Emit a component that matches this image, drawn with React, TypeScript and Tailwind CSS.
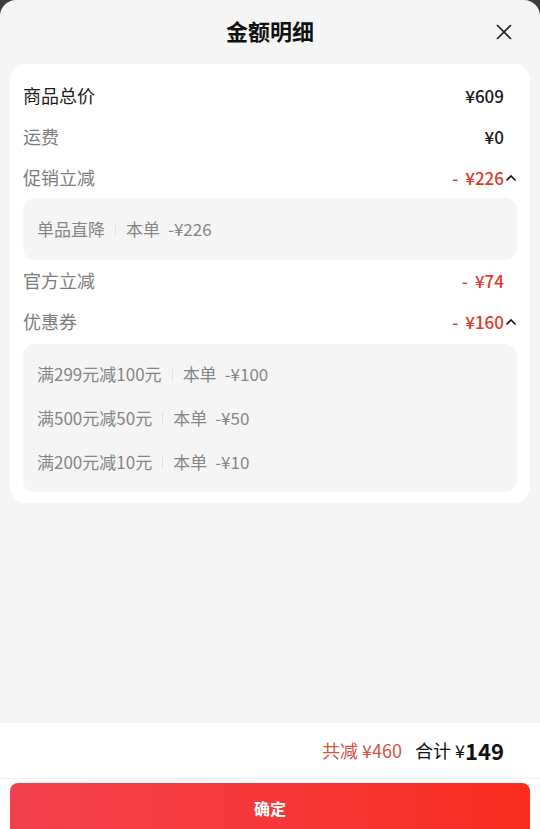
const ChevronUp = () => (
	<svg width="12" height="8" viewBox="0 0 12 8" className="ml-[1px]">
		<polyline points="1.5,6.5 6,2 10.5,6.5" fill="none" stroke="#111" strokeWidth="1.6" />
	</svg>
);

const Row = ({
	label,
	value,
	dark,
	red,
	arrow,
}: {
	label: string;
	value: string;
	dark?: boolean;
	red?: boolean;
	arrow?: boolean;
}) => (
	<div className="flex h-[41px] items-center justify-between">
		<span className={dark ? "text-[18px] text-[#1a1a1a]" : "text-[18px] text-[#7c7c7c]"}>{label}</span>
		<div className="flex items-center">
			{red ? (
				<span className="text-[17px] font-medium text-[#e0392a]">
					-<span className="ml-[7px]">{value}</span>
				</span>
			) : (
				<span className="text-[17px] font-medium text-[#1a1a1a]">{value}</span>
			)}
			<span className="flex w-[13px] justify-center">{arrow && <ChevronUp />}</span>
		</div>
	</div>
);

const SubItem = ({ name, amount }: { name: string; amount: string }) => (
	<div className="flex h-[44px] items-center text-[17px] text-[#858585]">
		<span>{name}</span>
		<span className="mx-[10px] h-[13px] w-px bg-[#e2e2e2]" />
		<span>本单</span>
		<span className="ml-[8px]">{amount}</span>
	</div>
);

export default function App() {
	return (
		<div
			className="h-[829px] overflow-hidden bg-[#3d3d3d]"
			style={{ fontFamily: '"Noto Sans CJK SC", "Noto Sans", sans-serif' }}
		>
			<div className="flex h-full flex-col rounded-t-[16px] bg-[#f5f5f5]">
				<div className="relative flex h-[64px] items-center justify-center pb-[4px]">
					<h1 className="text-[22px] font-bold text-[#111]">金额明细</h1>
					<button className="absolute right-[28px] top-[24px]">
						<svg width="16" height="16" viewBox="0 0 16 16">
							<path d="M1 1L15 15M15 1L1 15" stroke="#222" strokeWidth="1.7" fill="none" />
						</svg>
					</button>
				</div>

				<div className="mx-[10px] rounded-[16px] bg-white px-[13px] pb-[11px] pt-[11px]">
					<Row label="商品总价" value="¥609" dark />
					<Row label="运费" value="¥0" />
					<Row label="促销立减" value="¥226" red arrow />
					<div className="rounded-[12px] bg-[#f5f5f5] px-[14px] py-[9px]">
						<SubItem name="单品直降" amount="-¥226" />
					</div>
					<Row label="官方立减" value="¥74" red />
					<Row label="优惠券" value="¥160" red arrow />
					<div className="mt-[2px] rounded-[12px] bg-[#f5f5f5] px-[14px] py-[8px]">
						<SubItem name="满299元减100元" amount="-¥100" />
						<SubItem name="满500元减50元" amount="-¥50" />
						<SubItem name="满200元减10元" amount="-¥10" />
					</div>
				</div>

				<div className="flex-1" />

				<div className="bg-white">
					<div className="flex h-[56px] items-center justify-end border-b border-[#eeeeee] pr-[36px]">
						<span className="text-[18px] text-[#d4533f]">共减 ¥460</span>
						<span className="ml-[13px] text-[18px] text-[#111]">合计 ¥</span>
						<span className="text-[22px] font-bold text-[#111]">149</span>
					</div>
					<div className="px-[10px] pt-[4px]">
						<button className="flex h-[46px] w-full items-start justify-center rounded-t-[8px] bg-gradient-to-r from-[#f3404d] to-[#fb2c1c] pt-[13px] text-[16px] font-bold text-white">
							确定
						</button>
					</div>
				</div>
			</div>
		</div>
	);
}
